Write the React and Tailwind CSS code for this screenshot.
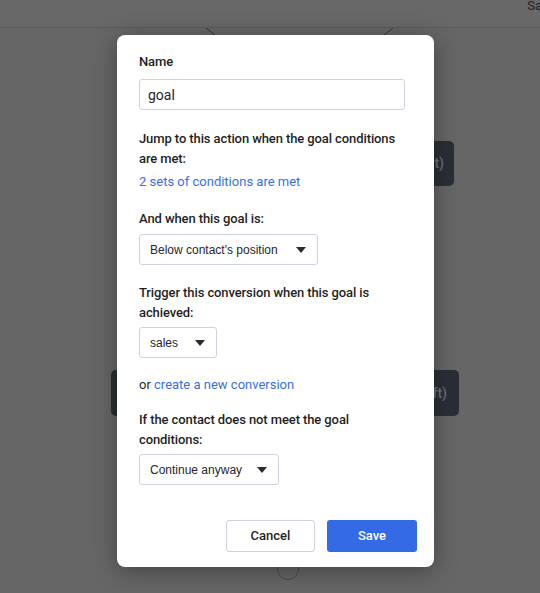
import { useState } from 'react'

const LABEL = 'text-[13px] font-medium leading-5 text-[#1f1f24] whitespace-nowrap tracking-[-0.1px]'
const FONT = { fontFamily: 'Roboto, "Noto Sans", sans-serif' }

function Caret() {
  return (
    <svg width="10" height="6" viewBox="0 0 10 6" className="shrink-0">
      <path d="M0 0h10L5 6z" fill="#2b2b30" />
    </svg>
  )
}

function Select({ value, width }) {
  return (
    <div
      className={`${width} h-[31px] flex items-center justify-between pl-[10px] pr-[11px] border border-[#cdd3e3] rounded-[3px] bg-white`}
    >
      <span className="text-[12px] text-[#26262b]" style={{ fontFamily: '"Liberation Sans", Arial, sans-serif' }}>
        {value}
      </span>
      <Caret />
    </div>
  )
}

export default function App() {
  const [name, setName] = useState('goal')

  return (
    <div className="relative w-[540px] h-[593px] overflow-hidden bg-[#666666]" style={FONT}>
      {/* background canvas (dimmed) */}
      <div className="h-[28px] border-b border-[#595959] bg-[#686868] flex justify-end">
        <span className="text-[13px] text-[#1f1f1f] leading-4 mt-[-2px] mr-[-2px]">Sa</span>
      </div>
      <svg className="absolute left-0 top-[28px]" width="540" height="10">
        <path d="M206 0 L216 8" stroke="#333" strokeWidth="1" />
        <path d="M393 0 L383 8" stroke="#333" strokeWidth="1" />
      </svg>
      <div className="absolute left-[119px] top-[141px] w-[335px] h-[45px] rounded-[5px] bg-[#2a2f37] flex items-center justify-end pr-[10px] text-[#6a6d72] text-[14px] font-semibold">
        t)
      </div>
      <div className="absolute left-[111px] top-[370px] w-[348px] h-[46px] rounded-[5px] bg-[#2a2f37] flex items-center justify-end pr-[12px] text-[#6a6d72] text-[14px] font-semibold">
        ft)
      </div>
      <div className="absolute left-[277px] top-[558px] w-[22px] h-[22px] rounded-full border border-[#4a4a4a]" />

      {/* modal */}
      <div className="absolute left-[117px] top-[35px] w-[317px] h-[532px] bg-white rounded-[8px] shadow-[0_4px_24px_rgba(0,0,0,0.35)] pl-[22px] pr-[17px] pt-[17px] flex flex-col">
        <div className="flex flex-col w-[266px]">
          <label className={LABEL}>Name</label>
          <input
            value={name}
            onChange={(e) => setName(e.target.value)}
            className="mt-[7px] h-[31px] w-[266px] border border-[#cdd3e3] rounded-[3px] px-[8px] text-[14px] text-[#26262b] outline-none"
          />

          <p className={`${LABEL} mt-[19px]`}>
            Jump to this action when the goal conditions
            <br />
            are met:
          </p>
          <a className="mt-[3px] text-[13px] leading-5 text-[#3b6fe0] cursor-pointer">2 sets of conditions are met</a>

          <p className={`${LABEL} mt-[17px]`}>And when this goal is:</p>
          <div className="mt-[5px]">
            <Select value="Below contact's position" width="w-[179px]" />
          </div>

          <p className={`${LABEL} mt-[18px]`}>
            Trigger this conversion when this goal is
            <br />
            achieved:
          </p>
          <div className="mt-[4px]">
            <Select value="sales" width="w-[78px]" />
          </div>

          <p className="mt-[17px] text-[13px] leading-5 text-[#26262b]">
            or <a className="text-[#3b6fe0] cursor-pointer">create a new conversion</a>
          </p>

          <p className={`${LABEL} mt-[15px]`}>
            If the contact does not meet the goal
            <br />
            conditions:
          </p>
          <div className="mt-[4px]">
            <Select value="Continue anyway" width="w-[140px]" />
          </div>
        </div>

        <div className="flex justify-end gap-[12px] mt-[35px]">
          <button className="w-[89px] h-[32px] border border-[#cdd3e3] rounded-[3px] bg-white text-[13px] font-medium text-[#1f1f24]">
            Cancel
          </button>
          <button className="w-[90px] h-[32px] rounded-[3px] bg-[#356ae6] text-[13px] font-medium text-white">
            Save
          </button>
        </div>
      </div>
    </div>
  )
}
